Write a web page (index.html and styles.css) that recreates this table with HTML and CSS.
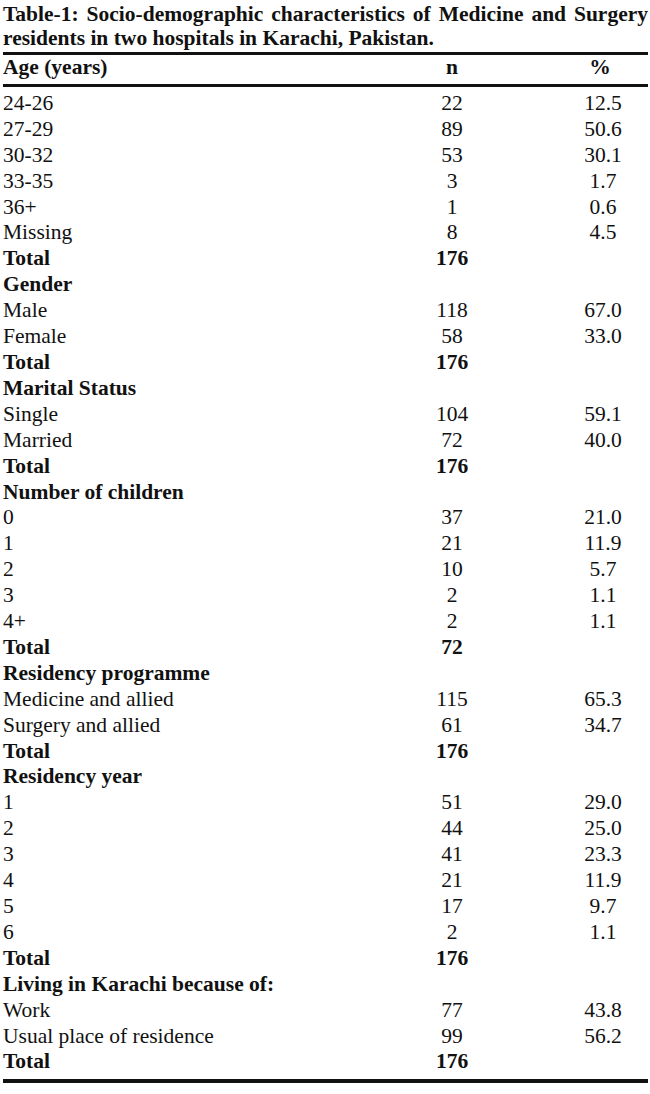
FILE: index.html
```html
<!DOCTYPE html>
<html lang="en">
<head>
<meta charset="utf-8">
<title>Table-1</title>
<link rel="stylesheet" href="styles.css">
</head>
<body>
<div class="page">
  <p class="caption">Table-1: Socio-demographic characteristics of Medicine and Surgery residents in two hospitals in Karachi, Pakistan.</p>
  <table class="data">
    <colgroup>
      <col class="c-label">
      <col class="c-n">
      <col class="c-pct">
    </colgroup>
    <thead>
      <tr><th class="label">Age (years)</th><th class="n">n</th><th class="pct">%</th></tr>
    </thead>
    <tbody>
      <tr><td>24-26</td><td class="n">22</td><td class="pct">12.5</td></tr>
      <tr><td>27-29</td><td class="n">89</td><td class="pct">50.6</td></tr>
      <tr><td>30-32</td><td class="n">53</td><td class="pct">30.1</td></tr>
      <tr><td>33-35</td><td class="n">3</td><td class="pct">1.7</td></tr>
      <tr><td>36+</td><td class="n">1</td><td class="pct">0.6</td></tr>
      <tr><td>Missing</td><td class="n">8</td><td class="pct">4.5</td></tr>
      <tr class="total"><td>Total</td><td class="n">176</td><td class="pct"></td></tr>
      <tr class="group"><td>Gender</td><td class="n"></td><td class="pct"></td></tr>
      <tr><td>Male</td><td class="n">118</td><td class="pct">67.0</td></tr>
      <tr><td>Female</td><td class="n">58</td><td class="pct">33.0</td></tr>
      <tr class="total"><td>Total</td><td class="n">176</td><td class="pct"></td></tr>
      <tr class="group"><td>Marital Status</td><td class="n"></td><td class="pct"></td></tr>
      <tr><td>Single</td><td class="n">104</td><td class="pct">59.1</td></tr>
      <tr><td>Married</td><td class="n">72</td><td class="pct">40.0</td></tr>
      <tr class="total"><td>Total</td><td class="n">176</td><td class="pct"></td></tr>
      <tr class="group"><td>Number of children</td><td class="n"></td><td class="pct"></td></tr>
      <tr><td>0</td><td class="n">37</td><td class="pct">21.0</td></tr>
      <tr><td>1</td><td class="n">21</td><td class="pct">11.9</td></tr>
      <tr><td>2</td><td class="n">10</td><td class="pct">5.7</td></tr>
      <tr><td>3</td><td class="n">2</td><td class="pct">1.1</td></tr>
      <tr><td>4+</td><td class="n">2</td><td class="pct">1.1</td></tr>
      <tr class="total"><td>Total</td><td class="n">72</td><td class="pct"></td></tr>
      <tr class="group"><td>Residency programme</td><td class="n"></td><td class="pct"></td></tr>
      <tr><td>Medicine and allied</td><td class="n">115</td><td class="pct">65.3</td></tr>
      <tr><td>Surgery and allied</td><td class="n">61</td><td class="pct">34.7</td></tr>
      <tr class="total"><td>Total</td><td class="n">176</td><td class="pct"></td></tr>
      <tr class="group"><td>Residency year</td><td class="n"></td><td class="pct"></td></tr>
      <tr><td>1</td><td class="n">51</td><td class="pct">29.0</td></tr>
      <tr><td>2</td><td class="n">44</td><td class="pct">25.0</td></tr>
      <tr><td>3</td><td class="n">41</td><td class="pct">23.3</td></tr>
      <tr><td>4</td><td class="n">21</td><td class="pct">11.9</td></tr>
      <tr><td>5</td><td class="n">17</td><td class="pct">9.7</td></tr>
      <tr><td>6</td><td class="n">2</td><td class="pct">1.1</td></tr>
      <tr class="total"><td>Total</td><td class="n">176</td><td class="pct"></td></tr>
      <tr class="group"><td>Living in Karachi because of:</td><td class="n"></td><td class="pct"></td></tr>
      <tr><td>Work</td><td class="n">77</td><td class="pct">43.8</td></tr>
      <tr><td>Usual place of residence</td><td class="n">99</td><td class="pct">56.2</td></tr>
      <tr class="total last"><td>Total</td><td class="n">176</td><td class="pct"></td></tr>
    </tbody>
  </table>
</div>
</body>
</html>
```

FILE: styles.css
```css
html, body {
  margin: 0;
  padding: 0;
  background: #ffffff;
}

body {
  font-family: "Liberation Serif", "Times New Roman", serif;
  font-size: 21.5px;
  color: #111111;
}

.page {
  width: 645px;
  padding: 2px 0 0 3px;
}

.caption {
  margin: 0;
  font-weight: bold;
  line-height: 24px;
  text-align: justify;
}

.data {
  margin-top: 2px;
  width: 645px;
  table-layout: fixed;
  border-collapse: collapse;
  border-spacing: 0;
}

.c-label { width: 373px; }
.c-n { width: 152px; }
.c-pct { width: 120px; }

.data th,
.data td {
  padding: 0;
  line-height: 25.9px;
  text-align: left;
  white-space: nowrap;
}

.data th {
  font-weight: bold;
  border-top: 3px solid #111111;
  border-bottom: 3px solid #111111;
  padding-bottom: 3px;
}

.data .n {
  text-align: center;
}

.data .pct {
  text-align: center;
  padding-left: 30px;
}

.data th.pct {
  padding-left: 24px;
}

.data tbody tr:first-child td {
  padding-top: 4px;
}

.data tr.group td,
.data tr.total td {
  font-weight: bold;
}

.data tr.last td {
  border-bottom: 4px solid #111111;
  padding-bottom: 4px;
}
```
